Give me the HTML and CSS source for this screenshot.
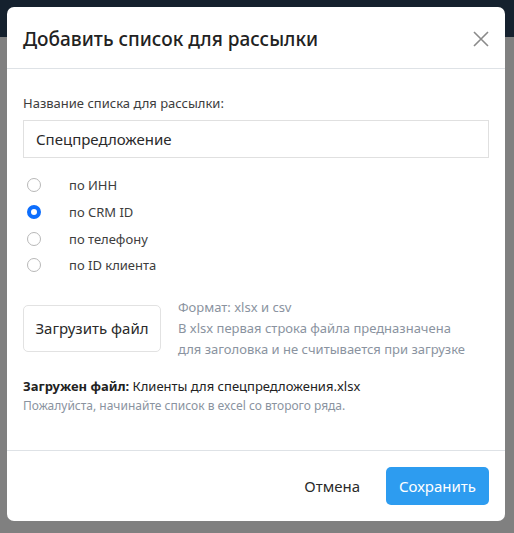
FILE: index.html
```html
<!DOCTYPE html>
<html lang="ru">
<head>
	<meta charset="UTF-8">
	<title>Добавить список для рассылки</title>
	<link rel="stylesheet" href="styles.css">
</head>
<body>
	<div class="modal">
		<div class="modal-header">
			<h5 class="modal-title">Добавить список для рассылки</h5>
			<button class="close" type="button">
				<svg width="16" height="16" viewBox="0 0 16 16"><path d="M1 1L15 15M15 1L1 15" stroke="#8a8a8a" stroke-width="1.6" fill="none"/></svg>
			</button>
		</div>
		<div class="modal-body">
			<label class="field-label" for="name">Название списка для рассылки:</label>
			<input class="field" type="text" id="name" value="Спецпредложение" />

			<div class="radios">
				<label class="radio"><span class="dot"></span>по ИНН</label>
				<label class="radio"><span class="dot checked"></span>по CRM ID</label>
				<label class="radio"><span class="dot"></span>по телефону</label>
				<label class="radio"><span class="dot"></span>по ID клиента</label>
			</div>

			<div class="upload">
				<button class="btn-upload" type="button">Загрузить файл</button>
				<div class="hint">
					Формат: xlsx и csv<br>
					В xlsx первая строка файла предназначена<br>
					для заголовка и не считывается при загрузке
				</div>
			</div>

			<p class="loaded"><b>Загружен файл:</b> Клиенты для спецпредложения.xlsx</p>
			<p class="note">Пожалуйста, начинайте список в excel со второго ряда.</p>
		</div>
		<div class="modal-footer">
			<button class="btn-cancel" type="button">Отмена</button>
			<button class="btn-save" type="button">Сохранить</button>
		</div>
	</div>
</body>
</html>
```

FILE: styles.css
```css
*{
	margin:0;
	padding:0;
	box-sizing: border-box;
	font-family: 'Noto Sans', 'Open Sans', sans-serif;
}
body{
	width:514px;
	height:533px;
	overflow: hidden;
	background: linear-gradient(#15212e 0, #15212e 37px, #808080 37px);
	padding:7px 9px 0 7px;
}
.modal{
	width:498px;
	background: #fff;
	border-radius: 7px;
	color: #222;
}
.modal-header{
	display: flex;
	align-items: center;
	justify-content: space-between;
	padding:17px 16px 14px;
	border-bottom: 1px solid #dee2e6;
}
.modal-title{
	font-size: 19px;
	font-weight: 500;
	line-height: 30px;
	color: #222;
}
.close{
	border:none;
	background: none;
	width:16px;
	height:16px;
	display: flex;
}
.modal-body{
	padding:24px 16px 0;
	height:381px;
}
.field-label{
	display: block;
	font-size: 13px;
	line-height: 21px;
	color: #3d3d3d;
	margin-bottom: 6px;
}
.field{
	width:100%;
	height:38px;
	border:1px solid #e0e0e0;
	padding:0 12px;
	font-size: 15px;
	color: #2a2a2a;
	outline: none;
}
.radios{
	margin-top:14px;
	display: flex;
	flex-direction: column;
}
.radio{
	display: flex;
	align-items: center;
	height:26.7px;
	font-size: 13px;
	color: #3d3d3d;
	padding-left:4px;
}
.dot{
	width:14px;
	height:14px;
	border-radius: 50%;
	border:1px solid #b8b8b8;
	margin-right:28px;
	flex-shrink: 0;
}
.dot.checked{
	border:4px solid #0d6efd;
	background: #fff;
}
.upload{
	margin-top:18px;
	display: flex;
	align-items: center;
	gap:17px;
}
.btn-upload{
	width:138px;
	height:47px;
	border:1px solid #e2e2e2;
	border-radius: 5px;
	background: #fff;
	font-size: 15px;
	color: #2a2a2a;
}
.hint{
	font-size: 13px;
	line-height: 21px;
	color: #8a93a0;
}
.loaded{
	margin-top:16px;
	font-size: 13px;
	line-height: 20px;
	color: #222;
}
.note{
	font-size: 12px;
	line-height: 20px;
	color: #8a93a0;
}
.modal-footer{
	display: flex;
	justify-content: flex-end;
	align-items: center;
	padding:16px;
	border-top: 1px solid #dee2e6;
}
.btn-cancel{
	border:none;
	background: none;
	font-size: 15px;
	color: #2a2a2a;
	padding:0 12px;
	height:38px;
	margin-right:14px;
}
.btn-save{
	border:none;
	background: #2d9cf0;
	color: #fff;
	font-size: 15px;
	height:38px;
	width:103px;
	border-radius: 5px;
}
```
